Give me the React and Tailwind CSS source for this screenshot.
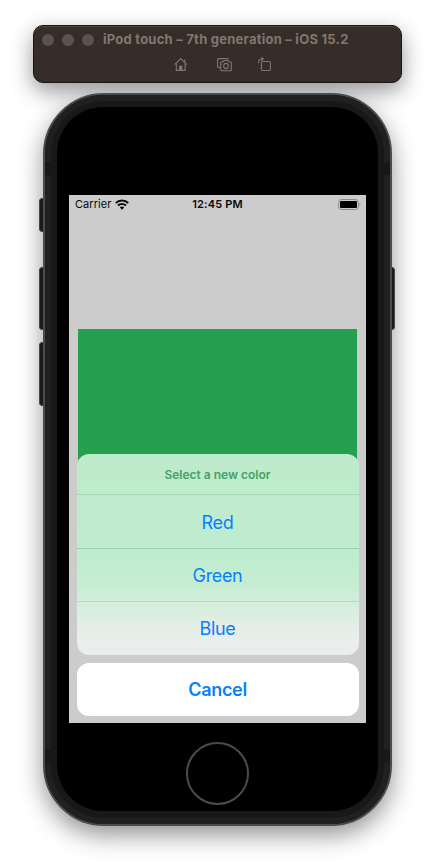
import React from "react";

function HomeIcon() {
  return (
    <svg className="h-[14px] w-[14px]" viewBox="0 0 14 14" fill="none" stroke="#81776f" strokeWidth="1.1">
      <path d="M.6 6.6 6.7.6l6.1 6" />
      <path d="M2.3 5.2v7.2h8.8V5.2M10.8 4.2V1.5" />
      <path d="M5.1 7.7h3.2v4.7H5.1z" fill="#81776f" stroke="none" />
    </svg>
  );
}

function ScreenshotIcon() {
  return (
    <svg className="h-[14px] w-[15px]" viewBox="0 0 15 14" fill="none" stroke="#81776f" strokeWidth="1.1">
      <path d="M3 9.5H1.6a1 1 0 0 1-1-1V1.6a1 1 0 0 1 1-1h8.9a1 1 0 0 1 1 1" />
      <path d="M4.7 3.8h1.4L7 2.5h4l.9 1.3h1.4a1 1 0 0 1 1 1v7a1 1 0 0 1-1 1H4.7a1 1 0 0 1-1-1v-7a1 1 0 0 1 1-1Z" />
      <ellipse cx="9" cy="8.1" rx="2.3" ry="2.7" />
    </svg>
  );
}

function RotateIcon() {
  return (
    <svg className="h-[15px] w-[14px]" viewBox="0 0 14 15" fill="none" stroke="#81776f" strokeWidth="1.1">
      <rect x="3.4" y="4.5" width="9" height="9" rx="1.2" />
      <path d="M.7 5.9V4.5A2.5 2.5 0 0 1 3.2 2h2M3.5.2 5.3 2 3.5 3.8" />
    </svg>
  );
}

function WifiIcon() {
  return (
    <svg className="h-[11px] w-[14px]" viewBox="0 0 14 11" fill="none" stroke="#080808" strokeWidth="2">
      <path d="M.8 4C4.3.6 9.7.6 13.2 4" />
      <path d="M3 6.5c2.3-2.1 5.7-2.1 8 0" />
      <path d="M7 10.7 4.8 8.5a3.1 3.1 0 0 1 4.4 0Z" fill="#080808" stroke="none" />
    </svg>
  );
}

function BatteryIcon() {
  return (
    <svg className="h-[11px] w-[23px]" viewBox="0 0 23 11">
      <rect x=".6" y=".5" width="19.8" height="10" rx="2.7" fill="none" stroke="#8b8b8b" />
      <rect x="2" y="2" width="17" height="7" rx="1" fill="#000" />
      <path d="M21.6 3.8v3.4c1-.6 1-2.8 0-3.4Z" fill="#858585" />
    </svg>
  );
}

function Toolbar() {
  return (
    <header className="h-[58px] w-[369px] rounded-[10px] border border-[#191614] bg-[#372d28] shadow-[0_8px_22px_rgba(0,0,0,0.42),inset_0_1px_0_#504740]">
      <div className="flex h-[27px] items-center pl-2">
        <div className="mt-px flex gap-2">
          <i className="size-3 rounded-full bg-[#5d534e]" />
          <i className="size-3 rounded-full bg-[#5d534e]" />
          <i className="size-3 rounded-full bg-[#5d534e]" />
        </div>
        <h1 className="-mt-px ml-[9px] whitespace-nowrap text-[13px] font-bold leading-4 tracking-[0.24px] text-[#81776f]">
          iPod touch – 7th generation – iOS 15.2
        </h1>
      </div>
      <div className="flex h-[23px] items-center pl-[140px]">
        <HomeIcon />
        <div className="ml-[29px] flex"><ScreenshotIcon /></div>
        <div className="ml-[26px] flex"><RotateIcon /></div>
      </div>
    </header>
  );
}

function ActionSheet() {
  return (
    <div className="absolute left-[7.5px] top-[259px] w-[282px] text-center text-[#087fff]">
      <div className="h-[201px] overflow-hidden rounded-[12px] bg-[linear-gradient(to_bottom,#bdebcb_0%,#c0eccf_54%,#c5edd2_64%,#d3eedb_74%,#e2eee6_84%,#e9eeeb_93%,#ebeeec_100%)]">
        <div className="flex h-[41px] items-center justify-center border-b border-[#a4d9b7] pt-[2px] text-[12px] font-semibold text-[#46a068]">
          Select a new color
        </div>
        <div className="flex h-[53.5px] items-center justify-center border-b border-[#97d4ad] pt-[2px] text-[18px] tracking-[-0.35px]">Red</div>
        <div className="flex h-[53.5px] items-center justify-center border-b border-[#b5d9c3] pt-[2px] text-[18px] tracking-[-0.35px]">Green</div>
        <div className="flex h-[53px] items-center justify-center text-[18px] tracking-[-0.35px]">Blue</div>
      </div>
      <div className="mt-[7.5px] flex h-[53px] items-center justify-center rounded-[12px] bg-white text-[18px] font-semibold tracking-[-0.3px]">
        Cancel
      </div>
    </div>
  );
}

function SideButton({ className }) {
  return <div className={"absolute w-[7px] border border-[#55585a] bg-[#222] " + className} />;
}

function Phone() {
  return (
    <main className="relative ml-[10px] mt-[10px] h-[733px] w-[349px]">
      <SideButton className="-left-[4px] top-[105px] h-[34px] rounded-l-[3px]" />
      <SideButton className="-left-[4px] top-[174px] h-[63px] rounded-l-[3px]" />
      <SideButton className="-left-[4px] top-[249px] h-[64px] rounded-l-[3px]" />
      <SideButton className="-right-[3px] top-[174px] h-[63px] rounded-r-[3px]" />
      <div className="relative h-full w-full rounded-[61px] border-2 border-[#4a4c4e] bg-[#202020] shadow-[0_9px_24px_rgba(0,0,0,0.43)]">
        <div className="h-full w-full rounded-[59px] border-[6px] border-[#202020] bg-[#181818] p-[6px] pb-[7px]">
          <div className="flex h-full w-full flex-col items-center rounded-[46px] bg-black pt-[88px]">
            <section className="relative h-[528px] w-[297px] shrink-0 bg-[#cccccc]">
              <div className="flex h-[19px] items-center justify-between px-[6px] text-[11px] text-[#080808]">
                <div className="flex w-[90px] items-center gap-[4px] tracking-[0.05px]">Carrier<WifiIcon /></div>
                <span className="font-semibold tracking-[0.15px]">12:45 PM</span>
                <div className="-mr-[1.5px] flex w-[91.5px] justify-end"><BatteryIcon /></div>
              </div>
              <div className="ml-[9px] mt-[115px] h-[140px] w-[279px] bg-[#24a04e]" />
              <ActionSheet />
            </section>
            <div className="mt-[19px] size-[63px] shrink-0 rounded-full border-2 border-[#4b4b4b]" />
          </div>
        </div>
        <i className="absolute left-0 top-[67px] h-[13px] w-[6px] bg-[#181818]" />
        <i className="absolute right-0 top-[67px] h-[13px] w-[6px] bg-[#181818]" />
        <i className="absolute bottom-[61px] left-0 h-[13px] w-[6px] bg-[#181818]" />
        <i className="absolute bottom-[61px] right-0 h-[13px] w-[6px] bg-[#181818]" />
      </div>
    </main>
  );
}

export default function App() {
  return (
    <div className="h-[868px] w-[435px] overflow-hidden bg-white pl-[33px] pt-[25px] font-[Inter,'Liberation_Sans',sans-serif]">
      <Toolbar />
      <Phone />
    </div>
  );
}
